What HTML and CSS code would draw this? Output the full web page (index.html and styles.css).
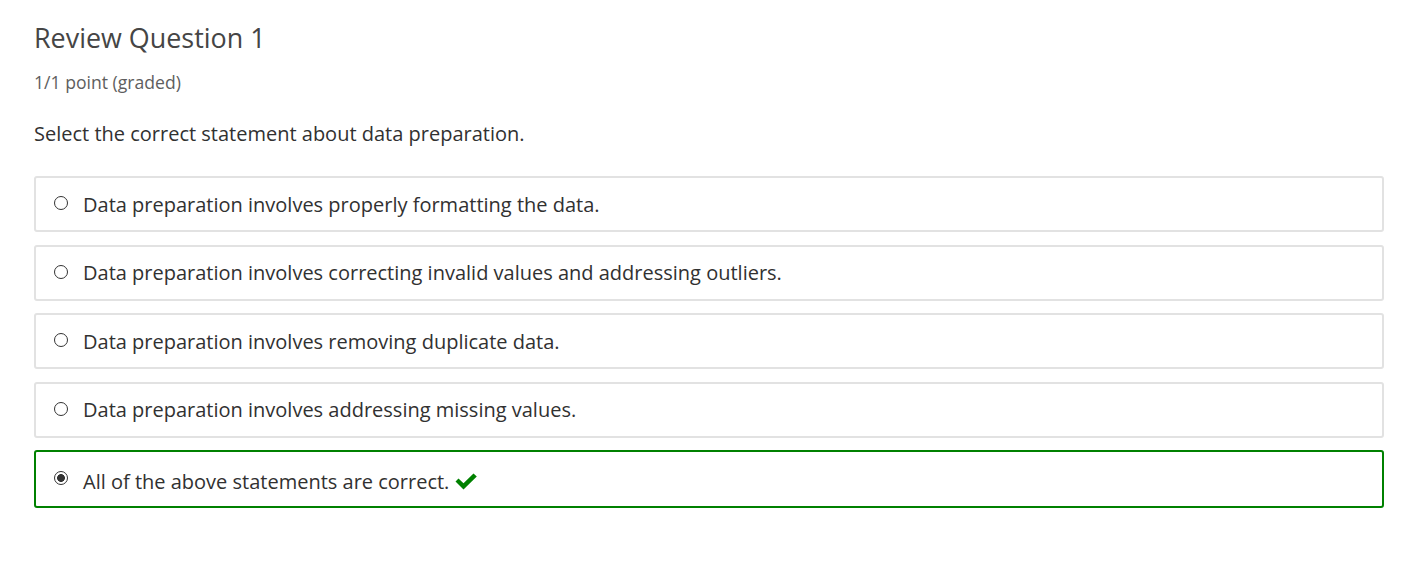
FILE: index.html
```html
<!DOCTYPE html>
<html>
<head>
<meta charset="utf-8">
<link rel="stylesheet" href="styles.css">
</head>
<body>
<div class="problem">
  <h3 class="title">Review Question 1</h3>
  <div class="points">1/1 point (graded)</div>
  <p class="prompt">Select the correct statement about data preparation.</p>
  <div class="choices">
    <label class="choice"><input type="radio" name="q1"><span>Data preparation involves properly formatting the data.</span></label>
    <label class="choice"><input type="radio" name="q1"><span>Data preparation involves correcting invalid values and addressing outliers.</span></label>
    <label class="choice"><input type="radio" name="q1"><span>Data preparation involves removing duplicate data.</span></label>
    <label class="choice"><input type="radio" name="q1"><span>Data preparation involves addressing missing values.</span></label>
    <label class="choice correct"><input type="radio" name="q1" checked><span class="label-text">All of the above statements are correct.</span>
      <svg class="check" width="23" height="17" viewBox="0 0 23 17"><path d="M0.5 8.5 L3.5 5.5 L8.5 10.2 L18.5 0.5 L21.8 3.6 L8.5 16.5 Z" fill="#008100"/></svg>
    </label>
  </div>
</div>
</body>
</html>
```
FILE: styles.css
```css
html, body {
  margin: 0;
  padding: 0;
  background: #fff;
}
body {
  font-family: "Open Sans", "Liberation Sans", sans-serif;
  color: #313131;
}
.problem {
  padding: 20px 30px 0 34px;
}
.title {
  margin: 0;
  font-size: 26.9px;
  font-weight: 400;
  color: #454545;
  line-height: 36px;
}
.points {
  margin-top: 15px;
  font-size: 17.6px;
  color: #5e5e5e;
  line-height: 22px;
}
.prompt {
  margin: 27px 0 0;
  font-size: 20px;
  line-height: 28px;
  color: #313131;
}
.choices {
  margin-top: 28px;
  display: flex;
  flex-direction: column;
  gap: 12.5px;
}
.choice {
  display: flex;
  align-items: center;
  height: 56px;
  box-sizing: border-box;
  border: 2px solid #e2e2e2;
  border-radius: 3px;
  padding-left: 18px;
  font-size: 20px;
  color: #313131;
}
.choice input {
  appearance: none;
  -webkit-appearance: none;
  margin: 0 15px 0 0;
  width: 14px;
  height: 14px;
  border: 1px solid #333;
  border-radius: 50%;
  box-sizing: border-box;
  background: #fff;
  flex: none;
  position: relative;
  top: -1px;
}
.choice input:checked {
  background: radial-gradient(circle, #333 0, #333 3.6px, #fff 4.2px);
}
.choice.correct {
  border-color: #008100;
  height: 58px;
}
.choice.correct .label-text {
  position: relative;
  top: 2px;
}
.check {
  margin-left: 6px;
  position: relative;
  top: 2px;
}
```
